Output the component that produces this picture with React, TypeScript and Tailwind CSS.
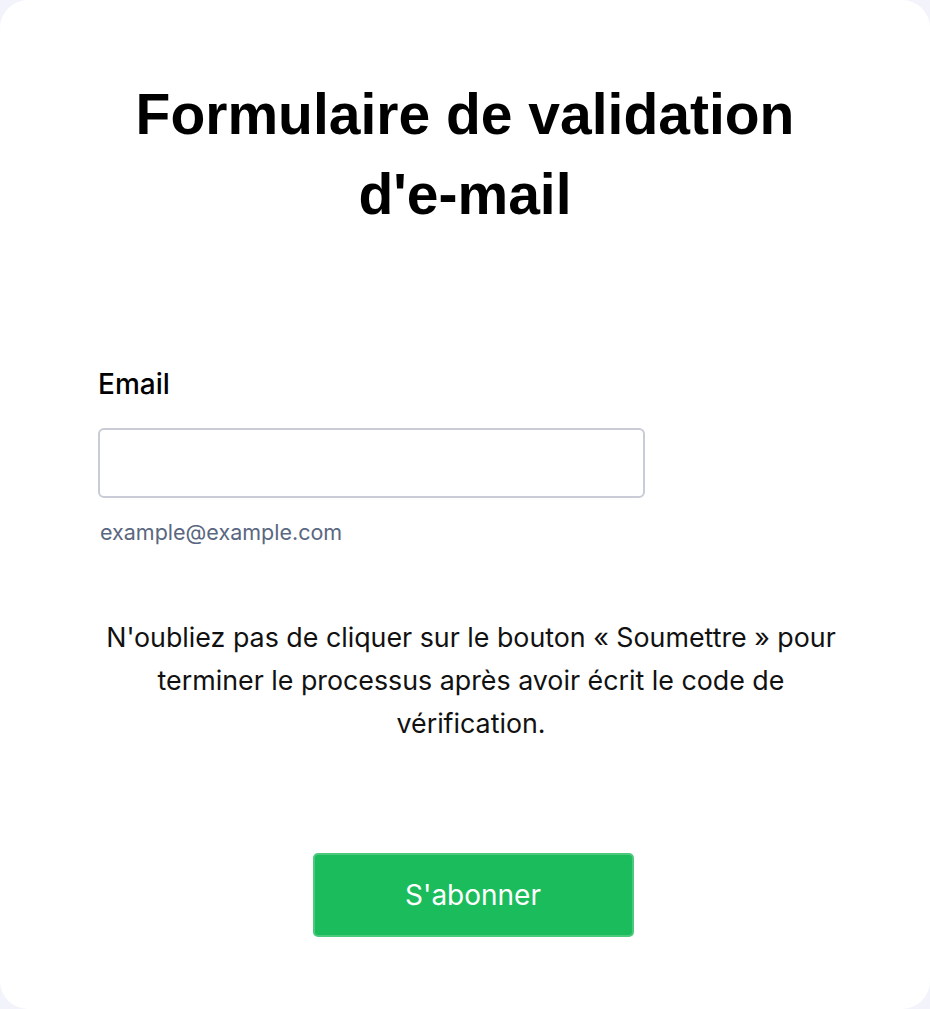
export default function App() {
  return (
    <div className="min-h-screen bg-[#f3f4fb]">
      <div
        className="flex h-[1009px] flex-col rounded-[28px] bg-white px-[98px]"
        style={{ fontFamily: "Inter, 'Noto Sans', sans-serif" }}
      >
        <h1
          className="mx-auto mt-[74px] w-[720px] text-center text-[57px] font-bold leading-[80px] text-black"
          style={{ fontFamily: "'Liberation Sans', Arial, sans-serif" }}
        >
          Formulaire de validation d'e-mail
        </h1>

        <label className="mt-[135px] text-[28px] font-medium leading-[30px] text-black">Email</label>
        <input
          type="email"
          className="mt-[29px] h-[70px] w-[547px] rounded-[6px] border-2 border-[#c9ccd6] bg-white px-4 text-[20px] outline-none"
        />
        <p className="mt-[20px] pl-[2px] text-[21.5px] leading-[28px] text-[#5a6780]">example@example.com</p>

        <p className="mt-[70px] w-[760px] self-center pl-[12px] text-center text-[26.8px] leading-[43px] text-[#111]">
          N'oubliez pas de cliquer sur le bouton « Soumettre » pour terminer le processus après avoir écrit le code de vérification.
        </p>

        <button className="mx-auto mt-[108px] h-[84px] w-[321px] translate-x-[8px] rounded-[5px] border-2 border-[#4cc97d] bg-[#1bbc5c] text-[28px] text-white">
          S'abonner
        </button>
      </div>
    </div>
  )
}
